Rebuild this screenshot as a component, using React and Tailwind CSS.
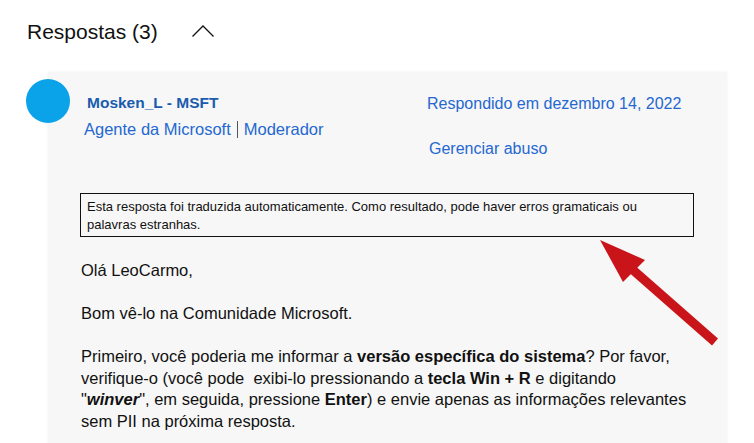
import React from 'react';

const FONT = { fontFamily: "'Liberation Sans', Arial, sans-serif" };

function ChevronUp() {
  return (
    <svg viewBox="0 0 22 12" className="w-[22px] h-[12px]" fill="none" stroke="#111" strokeWidth="1.3">
      <polyline points="0.5,11.5 11,1 21.5,11.5" />
    </svg>
  );
}

function RedArrow() {
  // pointing at the translation notice
  return (
    <svg className="absolute left-0 top-0 pointer-events-none" width="754" height="443" viewBox="0 0 754 443">
      <line x1="633" y1="270" x2="715" y2="342" stroke="#c91419" strokeWidth="9" />
      <polygon points="600,240 645,260 623,282" fill="#c91419" />
    </svg>
  );
}

export default function App() {
  return (
    <div className="relative w-[754px] h-[443px] bg-white overflow-hidden text-[#111]" style={FONT}>
      {/* heading */}
      <div className="flex items-center pt-[18px] pl-[27px]">
        <h2 className="text-[21px] leading-[28px] font-normal">Respostas (3)</h2>
        <span className="ml-[34px] -mt-[2px]"><ChevronUp /></span>
      </div>

      {/* answer card */}
      <div className="ml-[48px] mt-[26px] w-[679px] h-[400px] bg-[#f7f7f7] shadow-[0_0_3px_rgba(0,0,0,0.06)]">
        <div className="flex pt-[7px]">
          <div className="-ml-[22px] w-[44px] h-[44px] rounded-full bg-[#0aa2e8] shrink-0" />
          <div className="ml-[14px] w-[343px] pt-[14px]">
            <div className="pl-[3px] text-[15.5px] leading-[20px] font-semibold text-[#1a5cae]">Mosken_L - MSFT</div>
            <div className="mt-[5px] text-[16.5px] leading-[22px] text-[#2468d0] flex items-center">
              <span>Agente da Microsoft</span>
              <span className="mx-[6px] w-px h-[17px] bg-[#555]" />
              <span>Moderador</span>
            </div>
          </div>
          <div className="pt-[14px] text-[16px] text-[#2468d0]">
            <div className="leading-[22px]">Respondido em dezembro 14, 2022</div>
            <div className="mt-[23px] pl-[2px] leading-[22px]">Gerenciar abuso</div>
          </div>
        </div>

        <div className="ml-[32px] mt-[33px] w-[614px] border border-[#111] pl-[6px] pr-[4px] pt-[4px] pb-[2px] text-[13px] leading-[18px] text-[#111]">
          Esta resposta foi traduzida automaticamente. Como resultado, pode haver erros gramaticais ou palavras estranhas.
        </div>

        <div className="pl-[33px] pr-[20px] mt-[23px] text-[16.5px] leading-[21.5px] text-[#111]">
          <p className="mb-[21.5px]">Olá LeoCarmo,</p>
          <p className="mb-[21.5px]">Bom vê-lo na Comunidade Microsoft.</p>
          <p>
            Primeiro, você poderia me informar a <b>versão específica do sistema</b>? Por favor,<br />
            verifique-o (você pode&nbsp; exibi-lo pressionando a <b>tecla Win + R</b> e digitando<br />
            "<b><i>winver</i></b>", em seguida, pressione <b>Enter</b>) e envie apenas as informações relevantes<br />
            sem PII na próxima resposta.
          </p>
        </div>
      </div>

      <RedArrow />
    </div>
  );
}
